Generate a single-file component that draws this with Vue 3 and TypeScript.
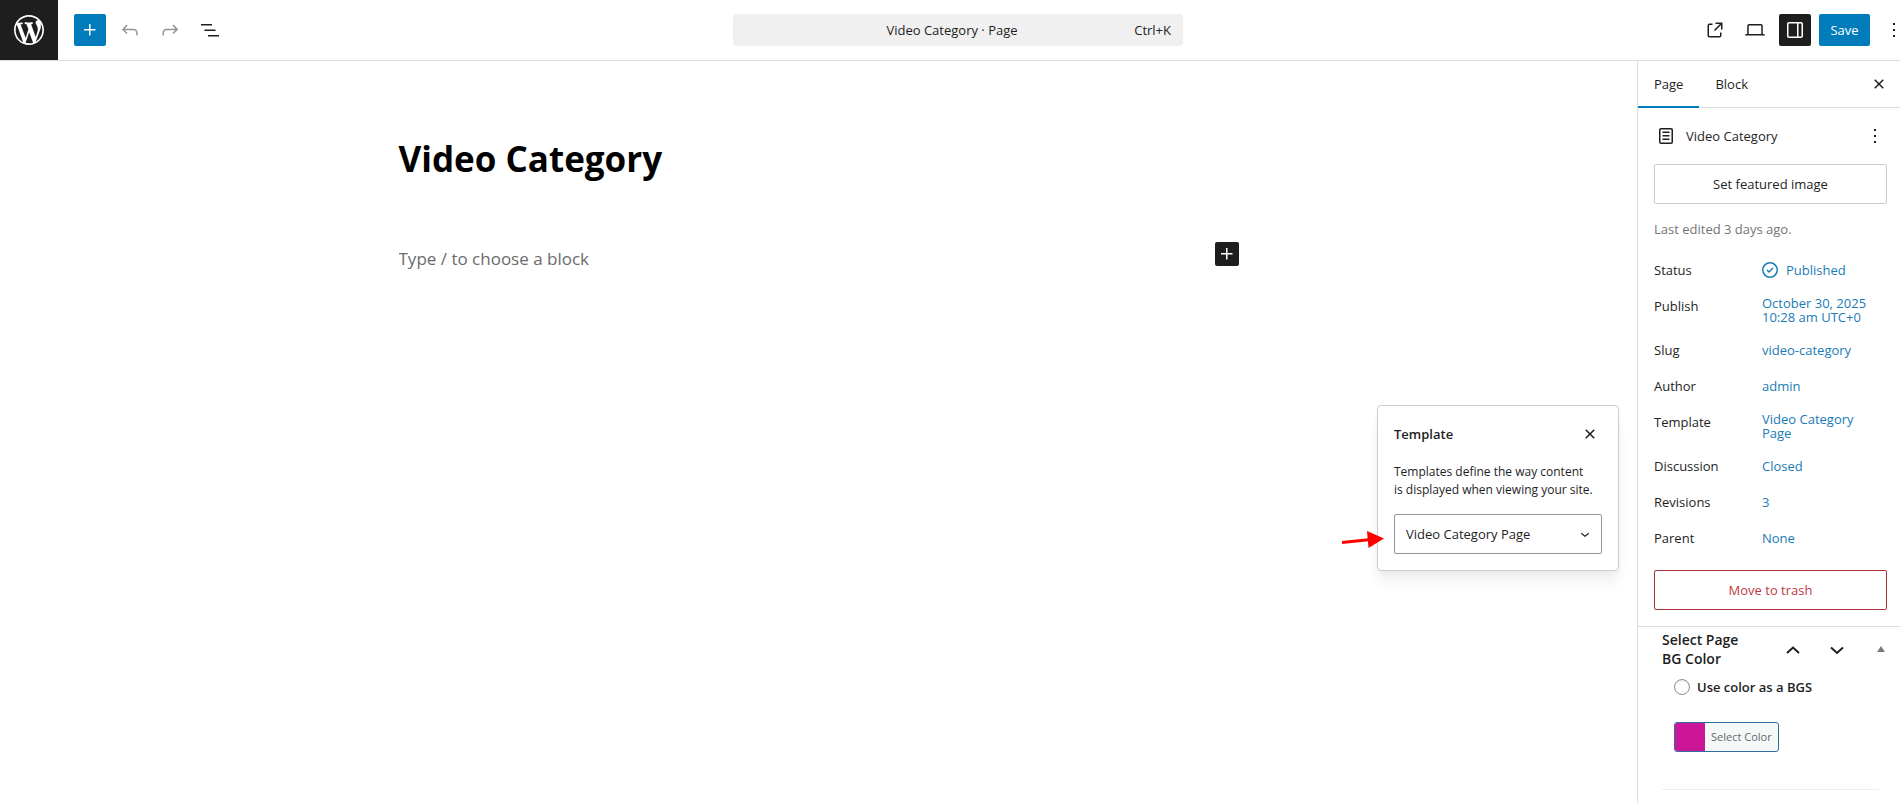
<script setup lang="ts">
import { ref } from 'vue'

interface SummaryRow {
  label: string
  value: string
  published?: boolean
}

const icons = {
  wordpress:
    'M20 10c0-5.51-4.49-10-10-10C4.48 0 0 4.49 0 10c0 5.52 4.48 10 10 10 5.51 0 10-4.48 10-10zM7.78 15.37L4.37 6.22c.55-.02 1.17-.08 1.17-.08.5-.06.44-1.13-.06-1.11 0 0-1.45.11-2.37.11-.18 0-.37 0-.58-.01C4.12 2.69 6.87 1.11 10 1.11c2.33 0 4.45.87 6.05 2.34-.68-.11-1.65.39-1.65 1.58 0 .74.45 1.36.9 2.1.35.61.55 1.36.55 2.46 0 1.49-1.4 5-1.4 5l-3.03-8.37c.54-.02.82-.17.82-.17.5-.05.44-1.25-.06-1.22 0 0-1.44.12-2.38.12-.87 0-2.33-.12-2.33-.12-.5-.03-.56 1.2-.06 1.22l.92.08 1.26 3.41zM17.41 10c.24-.64.74-1.87.43-4.25.7 1.29 1.05 2.71 1.05 4.25 0 3.29-1.73 6.24-4.4 7.78.97-2.59 1.94-5.2 2.92-7.78zM6.1 18.09C3.12 16.65 1.11 13.53 1.11 10c0-1.3.23-2.48.72-3.59C3.25 10.3 4.67 14.2 6.1 18.09zm4.03-6.63l2.58 6.98c-.86.29-1.76.45-2.71.45-.79 0-1.57-.11-2.29-.33.81-2.38 1.62-4.74 2.42-7.1z',
  plus: 'M11 12.5V17.5H12.5V12.5H17.5V11H12.5V6H11V11H6V12.5H11Z',
  undo: 'M18.3 11.7c-.6-.6-1.4-.9-2.3-.9H6.7l2.9-3.3-1.1-1-4.5 5L8.5 16l1-1-2.7-2.7H16c.5 0 .9.2 1.3.5 1 1 1 3.4 1 4.5v.3h1.5v-.2c0-1.5 0-4.3-1.5-5.7z',
  redo: 'M15.6 6.5l-1.1 1 2.9 3.3H8c-.9 0-1.7.3-2.3.9-1.4 1.5-1.4 4.2-1.4 5.6v.2h1.5v-.3c0-1.1 0-3.5 1-4.5.3-.3.7-.5 1.3-.5h9.2L14.5 15l1.1 1.1 4.6-4.6-4.6-5z',
  list: 'M3 6h11v1.5H3V6Zm3.5 5.5h11V13h-11v-1.5ZM21 17H10v1.5h11V17Z',
  external:
    'M19.5 4.5h-7V6h4.44l-5.97 5.97 1.06 1.06L18 7.06v4.44h1.5v-7Zm-13 1a2 2 0 0 0-2 2v10a2 2 0 0 0 2 2h10a2 2 0 0 0 2-2v-3H17v3a.5.5 0 0 1-.5.5h-10a.5.5 0 0 1-.5-.5v-10a.5.5 0 0 1 .5-.5h3V5.5h-3Z',
  desktop:
    'M20.5 16h-.7V8c0-1.1-.9-2-2-2H6.2c-1.1 0-2 .9-2 2v8h-.7c-.8 0-1.5.7-1.5 1.5h20c0-.8-.7-1.5-1.5-1.5zM5.7 8c0-.3.2-.5.5-.5h11.6c.3 0 .5.2.5.5v8H5.7V8z',
  drawer:
    'M18 4H6c-1.1 0-2 .9-2 2v12c0 1.1.9 2 2 2h12c1.1 0 2-.9 2-2V6c0-1.1-.9-2-2-2zm-4 14.5H6c-.3 0-.5-.2-.5-.5V6c0-.3.2-.5.5-.5h8v13zm4.5-.5c0 .3-.2.5-.5.5h-2.5v-13H18c.3 0 .5.2.5.5v12z',
  more: 'M13 19h-2v-2h2v2zm0-6h-2v-2h2v2zm0-6h-2V5h2v2z',
  close:
    'M12 13.06l3.712 3.713 1.061-1.06L13.061 12l3.712-3.712-1.06-1.06L12 10.938 8.288 7.227l-1.061 1.06L10.939 12l-3.712 3.712 1.06 1.061L12 13.061z',
  page: 'M15.5 7.5h-7V9h7V7.5Zm0 3.5h-7v1.5h7V11Zm0 3.5h-7V16h7v-1.5ZM17 4H7a2 2 0 0 0-2 2v12a2 2 0 0 0 2 2h10a2 2 0 0 0 2-2V6a2 2 0 0 0-2-2ZM7 5.5h10a.5.5 0 0 1 .5.5v12a.5.5 0 0 1-.5.5H7a.5.5 0 0 1-.5-.5V6a.5.5 0 0 1 .5-.5Z',
  published:
    'M12 18.5a6.5 6.5 0 1 1 0-13 6.5 6.5 0 0 1 0 13ZM4 12a8 8 0 1 1 16 0 8 8 0 0 1-16 0Zm11.53-1.47-1.06-1.06L11 12.94l-1.47-1.47-1.06 1.06L11 15.06l4.53-4.53Z',
  down: 'M17.5 11.6L12 16l-5.5-4.4.9-1.2L12 14l4.5-3.6 1 1.2z',
}

const rows: SummaryRow[] = [
  { label: 'Status', value: 'Published', published: true },
  { label: 'Publish', value: 'October 30, 2025 10:28 am UTC+0' },
  { label: 'Slug', value: 'video-category' },
  { label: 'Author', value: 'admin' },
  { label: 'Template', value: 'Video Category Page' },
  { label: 'Discussion', value: 'Closed' },
  { label: 'Revisions', value: '3' },
  { label: 'Parent', value: 'None' },
]

const template = ref('Video Category Page')
const useColor = ref(false)
</script>

<template>
  <div class="editor">
    <header class="topbar">
      <a class="logo" href="#" aria-label="View pages">
        <svg width="36" height="36" viewBox="-2 -2 24 24"><path :d="icons.wordpress" /></svg>
      </a>
      <div class="tools">
        <button class="tool primary" aria-label="Block inserter">
          <svg class="icon" viewBox="0 0 24 24"><path :d="icons.plus" /></svg>
        </button>
        <button class="tool muted" aria-label="Undo">
          <svg class="icon" viewBox="0 0 24 24"><path :d="icons.undo" /></svg>
        </button>
        <button class="tool muted" aria-label="Redo">
          <svg class="icon" viewBox="0 0 24 24"><path :d="icons.redo" /></svg>
        </button>
        <button class="tool" aria-label="Document overview">
          <svg class="icon" viewBox="0 0 24 24"><path :d="icons.list" /></svg>
        </button>
      </div>
      <button class="command">
        <span class="command-title">Video Category · Page</span>
        <span class="shortcut">Ctrl+K</span>
      </button>
      <div class="actions">
        <button class="tool" aria-label="View page">
          <svg class="icon" viewBox="0 0 24 24"><path :d="icons.external" /></svg>
        </button>
        <button class="tool" aria-label="Preview">
          <svg class="icon" viewBox="0 0 24 24"><path :d="icons.desktop" /></svg>
        </button>
        <button class="tool dark" aria-label="Settings">
          <svg class="icon" viewBox="0 0 24 24"><path fill-rule="evenodd" :d="icons.drawer" /></svg>
        </button>
        <button class="tool save">Save</button>
        <button class="tool" aria-label="Options">
          <svg class="icon" viewBox="0 0 24 24"><path :d="icons.more" /></svg>
        </button>
      </div>
    </header>

    <div class="body">
      <main class="canvas">
        <div class="content">
          <h1 class="post-title">Video Category</h1>
          <div class="block">
            <input class="block-input" type="text" placeholder="Type / to choose a block" aria-label="Empty block" />
            <button class="inserter" aria-label="Add block">
              <svg class="icon" viewBox="0 0 24 24"><path :d="icons.plus" /></svg>
            </button>
          </div>
        </div>

        <section class="popover" aria-labelledby="popover-title">
          <div class="popover-head">
            <h2 id="popover-title">Template</h2>
            <button class="small" aria-label="Close template">
              <svg class="icon" viewBox="0 0 24 24"><path :d="icons.close" /></svg>
            </button>
          </div>
          <p>Templates define the way content<br />is displayed when viewing your site.</p>
          <div class="select">
            <select v-model="template" aria-label="Template">
              <option>Video Category Page</option>
            </select>
            <svg width="18" height="18" viewBox="0 0 24 24"><path :d="icons.down" /></svg>
          </div>
          <svg class="arrow" width="44" height="18" viewBox="0 0 44 18">
            <path class="shaft" d="M1 11.500 30 8.500" />
            <path d="M26 0 43 7.500 27.500 17z" />
          </svg>
        </section>
      </main>

      <aside class="sidebar">
        <div class="tabs" role="tablist">
          <button class="tab active" role="tab" aria-selected="true">Page</button>
          <button class="tab" role="tab" aria-selected="false">Block</button>
          <button class="small tabs-close" aria-label="Close settings">
            <svg class="icon" viewBox="0 0 24 24"><path :d="icons.close" /></svg>
          </button>
        </div>

        <div class="summary">
          <div class="card-head">
            <svg class="icon" viewBox="0 0 24 24"><path fill-rule="evenodd" :d="icons.page" /></svg>
            <h2>Video Category</h2>
            <button class="small" aria-label="Actions">
              <svg class="icon" viewBox="0 0 24 24"><path :d="icons.more" /></svg>
            </button>
          </div>
          <button class="wide">Set featured image</button>
          <p class="edited">Last edited 3 days ago.</p>
          <dl class="rows">
            <div v-for="row in rows" :key="row.label" class="row">
              <dt>{{ row.label }}</dt>
              <dd>
                <button class="value">
                  <svg v-if="row.published" class="icon" viewBox="0 0 24 24">
                    <path fill-rule="evenodd" :d="icons.published" />
                  </svg>
                  <span>{{ row.value }}</span>
                </button>
              </dd>
            </div>
          </dl>
          <button class="wide trash">Move to trash</button>
        </div>

        <section class="metabox">
          <div class="meta-head">
            <h2>Select Page BG Color</h2>
            <button class="order" aria-label="Move up">
              <svg width="24" height="24" viewBox="0 0 24 24"><path class="stroke" d="M6 16 12 10.500 18 16" /></svg>
            </button>
            <button class="order" aria-label="Move down">
              <svg width="24" height="24" viewBox="0 0 24 24"><path class="stroke" d="M6 10.500 12 16 18 10.500" /></svg>
            </button>
            <button class="toggle" aria-label="Toggle panel">
              <svg width="8" height="6" viewBox="0 0 8 6"><path d="M4 0 8 6H0z" /></svg>
            </button>
          </div>
          <div class="meta-body">
            <label class="radio">
              <input v-model="useColor" type="radio" name="use-color" :value="true" />
              <span>Use color as a BGS</span>
            </label>
            <button class="color"><span class="swatch"></span><span class="color-text">Select Color</span></button>
          </div>
          <hr />
        </section>
      </aside>
    </div>
  </div>
</template>

<style>
body {
  margin: 0;
  overflow: hidden;
}
</style>

<style scoped>
.editor,
.editor * {
  box-sizing: border-box;
}
.editor {
  display: flex;
  flex-direction: column;
  height: 100vh;
  overflow: hidden;
  background: #fff;
  color: #1e1e1e;
  font: 13px/18px 'Open Sans', 'Noto Sans', sans-serif;
}
button,
input,
select {
  margin: 0;
  padding: 0;
  border: 0;
  background: none;
  color: inherit;
  font: inherit;
}
h1,
h2,
p,
dl,
dd {
  margin: 0;
}
svg {
  display: block;
  flex: none;
  fill: currentColor;
}
.icon {
  width: 24px;
  height: 24px;
}

.topbar {
  display: grid;
  grid-template-columns: 58px 1fr 450px 1fr 42px;
  align-items: center;
  flex: none;
  height: 61px;
  border-bottom: 1px solid #ddd;
}
.logo {
  display: flex;
  align-items: center;
  justify-content: center;
  align-self: stretch;
  background: #1e1e1e;
  color: #fff;
}
.tools,
.actions {
  display: flex;
  gap: 8px;
}
.tools {
  padding-left: 16px;
}
.actions {
  grid-column: 4 / 6;
  justify-content: flex-end;
  margin-right: -10px;
}
.tool {
  display: flex;
  align-items: center;
  justify-content: center;
  width: 32px;
  height: 32px;
  border-radius: 2px;
}
.primary,
.save {
  background: #007cba;
  color: #fff;
}
.muted {
  color: #949494;
}
.dark {
  background: #1e1e1e;
  color: #fff;
}
.save {
  width: 51px;
}
.command {
  display: grid;
  grid-template-columns: 1fr auto 1fr;
  align-items: center;
  height: 32px;
  padding-right: 12px;
  border-radius: 4px;
  background: #f0f0f0;
}
.command-title {
  grid-column: 2;
}
.shortcut {
  text-align: right;
}

.body {
  display: flex;
  flex: 1;
  min-height: 0;
}
.canvas {
  position: relative;
  flex: 1;
  min-width: 0;
}
.content {
  max-width: 840px;
  margin: 0 auto;
  padding-top: 76px;
}
.post-title {
  color: #000;
  font-size: 35px;
  line-height: 44px;
  font-weight: 700;
}
.block {
  display: flex;
  align-items: flex-start;
  margin-top: 61px;
}
.block-input {
  flex: 1;
  height: 32px;
  font-size: 17px;
  outline: none;
}
.block-input::placeholder {
  color: #6b6b6b;
  opacity: 1;
}
.inserter {
  display: flex;
  border-radius: 2px;
  background: #1e1e1e;
  color: #fff;
}

.popover {
  position: absolute;
  top: 344px;
  right: 18px;
  width: 242px;
  padding: 16px;
  border: 1px solid #ccc;
  border-radius: 4px;
  background: #fff;
  box-shadow: 0 4px 5px rgba(0, 0, 0, 0.03), 0 12px 12px rgba(0, 0, 0, 0.03), 0 16px 16px rgba(0, 0, 0, 0.02);
}
.popover-head {
  display: flex;
  align-items: center;
  justify-content: space-between;
  height: 24px;
  margin-bottom: 17px;
}
.popover h2 {
  font-size: 13px;
  line-height: 18px;
  font-weight: 600;
}
.popover p {
  font-size: 12px;
  white-space: nowrap;
}
.small {
  display: flex;
}
.select {
  position: relative;
  margin-top: 15px;
}
.select select {
  width: 100%;
  height: 40px;
  padding: 0 32px 0 11px;
  border: 1px solid #949494;
  border-radius: 2px;
  appearance: none;
}
.select svg {
  position: absolute;
  top: 11px;
  right: 8px;
  pointer-events: none;
}
.arrow {
  position: absolute;
  top: 125px;
  left: -37px;
  fill: #f00;
}
.shaft {
  stroke: #f00;
  stroke-width: 3;
}

.sidebar {
  flex: none;
  width: 263px;
  border-left: 1px solid #ddd;
  overflow: hidden;
}
.tabs {
  display: flex;
  align-items: center;
  height: 47px;
  padding-right: 9px;
  border-bottom: 1px solid #ddd;
}
.tab {
  align-self: stretch;
  padding: 0 16px 2px;
  margin-bottom: -1px;
}
.active {
  box-shadow: inset 0 -2px 0 #007cba;
}
.tabs-close {
  margin-left: auto;
}
.summary {
  display: flex;
  flex-direction: column;
  padding: 16px 13px 16px 16px;
}
.card-head {
  display: flex;
  align-items: center;
  gap: 8px;
  height: 24px;
  margin-bottom: 16px;
}
.card-head h2 {
  flex: 1;
  font-size: 13px;
  line-height: 18px;
  font-weight: 500;
}
.wide {
  height: 40px;
  border: 1px solid #ccc;
  border-radius: 2px;
}
.edited {
  margin: 16px 0;
  color: #757575;
}
.rows {
  display: flex;
  flex-direction: column;
  gap: 4px;
}
.row {
  display: grid;
  grid-template-columns: 108px 1fr;
}
.row dt {
  line-height: 32px;
}
.value {
  display: flex;
  align-items: center;
  gap: 4px;
  min-height: 32px;
  padding: 6px 16px 6px 0;
  color: #1a7bb5;
  line-height: 14px;
  text-align: left;
}
.value .icon {
  margin: -2px 0 -2px -4px;
}
.trash {
  margin-top: 16px;
  border-color: #a83236;
  color: #c0393f;
}

.metabox {
  border-top: 1px solid #ddd;
  padding: 3px 21px 0 24px;
}
.meta-head {
  display: flex;
  align-items: center;
}
.meta-head h2 {
  width: 109px;
  padding-right: 16px;
  font-size: 14px;
  line-height: 19px;
  font-weight: 600;
}
.order {
  display: flex;
  justify-content: center;
  width: 44px;
}
.stroke {
  fill: none;
  stroke: currentColor;
  stroke-width: 2;
}
.toggle {
  margin: 0 -6px 0 auto;
  color: #787c82;
}
.meta-body {
  padding: 10px 0 0 12px;
}
.radio {
  display: flex;
  align-items: center;
  gap: 7px;
  font-weight: 600;
}
.radio input {
  width: 16px;
  height: 16px;
  border: 1px solid #8c8f94;
  border-radius: 50%;
  appearance: none;
  box-shadow: inset 0 1px 2px rgba(0, 0, 0, 0.1);
}
.color {
  display: flex;
  height: 30px;
  margin-top: 26px;
  border: 1px solid #2f6da5;
  border-radius: 3px;
  overflow: hidden;
  background: #f6f7f7;
  color: #646970;
  font-size: 11px;
  line-height: 28px;
}
.swatch {
  width: 30px;
  background: #ca1697;
}
.color-text {
  padding: 0 6px;
}
hr {
  height: 1px;
  margin: 37px 0 0;
  border: 0;
  background: #eee;
}
</style>
